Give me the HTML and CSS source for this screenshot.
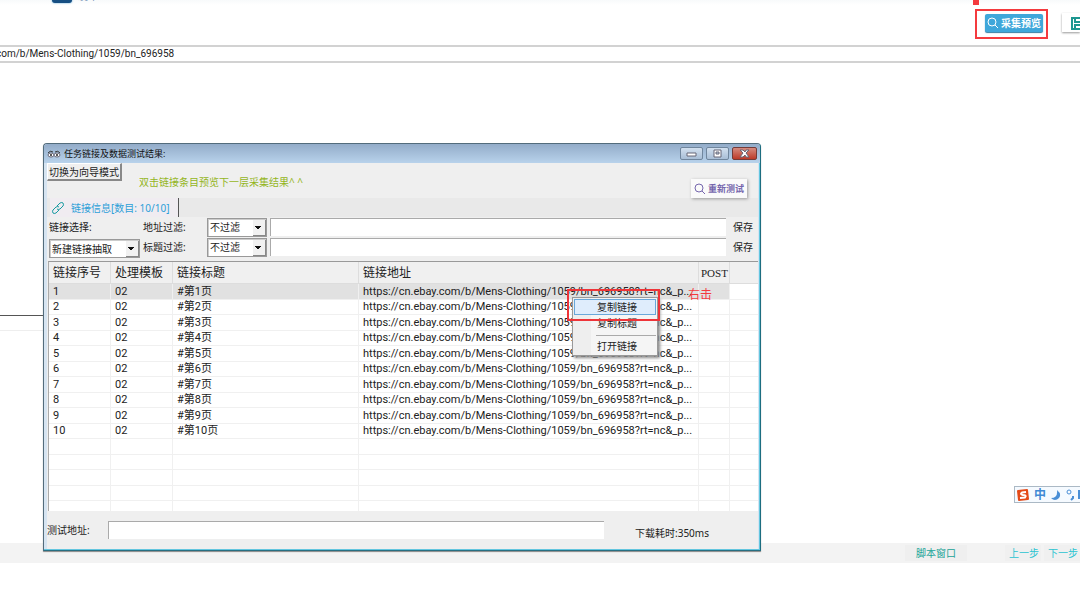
FILE: index.html
```html
<!DOCTYPE html>
<html lang="zh-CN">
<head>
<meta charset="utf-8">
<title>任务链接及数据测试结果</title>
<link rel="stylesheet" href="styles.css">
<script src="rows.js" defer></script>
</head>
<body>
<div class="app">
  <header class="topbar">
    <div class="brand"><span class="brand-mark"></span><span class="brand-name">发布</span></div>
    <div class="tools">
      <span class="marker-dot"></span>
      <div class="marker">
        <button class="preview" type="button"><svg viewBox="0 0 12 12" width="12" height="12"><circle cx="5" cy="5" r="4"/><path d="M8 8l3 3"/></svg>采集预览</button>
      </div>
      <button class="save" type="button" aria-label="保存任务"><svg viewBox="0 0 14 14" width="14" height="14"><path d="M1 2h10l2 2v9H1z"/><path d="M4 2v4h6V2M4 13V9h6v4"/></svg></button>
    </div>
  </header>
  <input class="url" type="text" aria-label="网址" value="com/b/Mens-Clothing/1059/bn_696958">
  <main class="workspace">
    <div class="side-panel"></div>
  </main>
  <footer class="steps">
    <button class="script" type="button">脚本窗口</button>
    <button class="step" type="button">上一步</button>
    <button class="step" type="button">下一步</button>
  </footer>
  <div class="ime">
    <svg viewBox="0 0 14 14" width="14" height="14"><path d="M1 3Q1 2 2 2l9-1q1 0 1 1l1 9q0 1-1 1l-9 1q-1 0-1-1z" fill="#e44a18"/><path d="M10 4L6 4.500Q3.500 6 7 7q4 0 2 2.500L4 10" fill="none" stroke="#fff" stroke-width="2"/></svg>
    <span>中</span>
    <svg viewBox="0 0 12 12" width="12" height="12"><path d="M7 1q5 4 2 8-4 4-8 0 7 0 6-8z" fill="#4a8fd6"/></svg>
    <svg viewBox="0 0 10 12" width="10" height="12"><circle cx="3" cy="3" r="2" fill="none" stroke="#4a8fd6"/><path d="M7 7v2l-2 2" fill="none" stroke="#4a8fd6" stroke-width="2"/></svg>
    <i></i>
  </div>

  <section class="dialog" role="dialog" aria-labelledby="dialog-title">
    <div class="titlebar">
      <svg viewBox="0 0 14 8" width="14" height="8"><ellipse class="eye" cx="4" cy="5" rx="3" ry="2"/><ellipse class="eye" cx="10" cy="5" rx="3" ry="2"/><path class="brow" d="M1 3Q3 0 6 2M8 2q3-2 5 1"/><circle cx="4" cy="5" r="1"/><circle cx="10" cy="5" r="1"/></svg>
      <h1 id="dialog-title">任务链接及数据测试结果:</h1>
      <button class="win" type="button" aria-label="最小化"><svg viewBox="0 0 11 9" width="11" height="9"><path d="M1 4h9v3H1z"/></svg></button>
      <button class="win" type="button" aria-label="最大化"><svg viewBox="0 0 11 9" width="11" height="9"><path d="M2 1h7v7H2zM4 3h3v2H4z"/></svg></button>
      <button class="win close" type="button" aria-label="关闭"><svg viewBox="0 0 11 9" width="11" height="9"><path d="M1 1h3l2 2 1-2h3L7 4l3 4H7L6 6 4 8H1l3-4z"/></svg></button>
    </div>
    <div class="content">
      <div class="toolbar">
        <button class="mode" type="button">切换为向导模式</button>
        <p class="hint">双击链接条目预览下一层采集结果^ ^</p>
        <button class="retest" type="button"><svg viewBox="0 0 12 12" width="12" height="12"><circle cx="5" cy="5" r="4"/><path d="M8 8l3 3"/></svg>重新测试</button>
      </div>
      <div class="tabs">
        <button class="tab" type="button"><svg viewBox="0 0 14 14" width="14" height="14"><path d="M6 5l3-3q2-1 3 0 1 2 0 3L9 8Q7 9 6 8M8 9l-3 3q-2 1-3 0-1-2 0-3l3-3q2-1 3 0"/></svg>链接信息[数目: 10/10]</button>
      </div>
      <div class="filters">
        <label for="pick">链接选择:</label>
        <label for="addr-mode">地址过滤:</label>
        <span class="combo"><select id="addr-mode"><option>不过滤</option></select></span>
        <input class="field" type="text" aria-label="地址过滤内容">
        <button class="plain" type="button">保存</button>
        <span class="combo pick"><select id="pick"><option>新建链接抽取</option></select></span>
        <label for="title-mode">标题过滤:</label>
        <span class="combo"><select id="title-mode"><option>不过滤</option></select></span>
        <input class="field" type="text" aria-label="标题过滤内容">
        <button class="plain" type="button">保存</button>
      </div>
      <div class="list">
        <table>
          <colgroup><col class="c-id"><col class="c-id"><col class="c-title"><col><col class="c-post"><col class="c-rest"></colgroup>
          <thead><tr><th>链接序号</th><th>处理模板</th><th>链接标题</th><th>链接地址</th><th class="post">POST</th><th></th></tr></thead>
          <tbody id="rows"></tbody>
        </table>
        <div class="menu">
          <button class="active" type="button">复制链接</button>
          <button type="button">复制标题</button>
          <hr>
          <button type="button">打开链接</button>
        </div>
        <div class="callout"></div>
        <span class="callout-text">右击</span>
      </div>
      <div class="status">
        <label for="test-url">测试地址:</label>
        <input class="field" id="test-url" type="text">
        <span class="time">下载耗时:350ms</span>
      </div>
    </div>
  </section>
</div>
</body>
</html>
```
FILE: rows.js
```js
const body = document.getElementById('rows');
const url = 'https://cn.ebay.com/b/Mens-Clothing/1059/bn_696958?rt=nc&_p...';
for (let i = 1; i <= 15; i++) {
  const row = body.insertRow();
  const values = i <= 10 ? [i, '02', `#第${i}页`, url, '', ''] : ['', '', '', '', '', ''];
  for (const value of values) row.insertCell().textContent = value;
}
```
FILE: styles.css
```css
* { box-sizing: border-box; }
body { margin: 0; background: #fff; }
body, button, input, select {
  font-family: "Noto Sans", "Noto Sans CJK SC", sans-serif;
  font-size: 10px;
  line-height: 14px;
  color: #222;
}
button { border: 0; padding: 0; background: none; white-space: nowrap; }
svg { flex: none; }

.app { position: relative; min-height: 100vh; display: flex; flex-direction: column; overflow: hidden; }
.topbar { height: 45px; display: flex; justify-content: space-between; overflow: hidden; background: linear-gradient(#f8fafb, #fff 5px); }
.brand { display: flex; gap: 6px; margin: -11px 0 0 52px; height: 14px; }
.brand-mark { width: 20px; background: #174f83; border-radius: 3px; box-shadow: 0 0 2px #4d9fd0; }
.brand-name { color: #7190b5; }
.tools { display: flex; position: relative; }
.marker-dot { position: absolute; left: -2px; top: -1px; width: 6px; height: 6px; background: #f43a3e; }
.marker { margin-top: 9px; width: 73px; height: 30px; border: 2px solid #f43a3e; display: flex; justify-content: flex-end; padding: 3px 3px 0 0; }
.preview { display: flex; align-items: center; justify-content: center; gap: 2px; width: 58px; height: 18px; background: #3fa7da; color: #fff; font-weight: 700; border-radius: 2px; box-shadow: 0 1px 1px #347fa5; }
.preview svg, .retest svg, .save svg, .tab svg { fill: none; stroke: currentColor; stroke-width: 1; }
.save { margin: 13px 0 0 14px; width: 18px; height: 19px; overflow: hidden; padding-left: 9px; color: #1d9690; box-shadow: 0 1px 2px #999; display: flex; align-items: center; }
.save svg { stroke-width: 2; }

.url { width: 100%; height: 18px; border: solid #d2d2d2; border-width: 2px 0; padding: 0 0 2px; text-indent: -4px; outline: 0; font-family: Roboto, "Noto Sans CJK SC", sans-serif; }
.workspace { height: 480px; }
.side-panel { width: 43px; height: 268px; border-bottom: 1px solid #eee; background: linear-gradient(#555, #555) 0 252px / 100% 1px no-repeat; }
.steps { height: 20px; background: #f3f3f3; display: flex; justify-content: flex-end; align-items: center; }
.script { width: 62px; height: 16px; background: #efefef; color: #20a397; margin-right: 38px; }
.step { height: 16px; background: #f0f0f0; color: #2bc4d0; padding: 0 2px 0 4px; }
.step + .step { margin-left: 3px; }

.ime { position: absolute; right: 0; top: 486px; width: 66px; height: 17px; border: 1px solid #abb9c5; border-right: 0; background: #f5faff; display: flex; align-items: center; gap: 4px; padding-left: 1px; overflow: hidden; color: #3f89d4; font-weight: 700; font-size: 12px; }
.ime svg + i { margin-left: -2px; }
.ime i { width: 4px; height: 9px; background: #4a8fd6; flex: none; }

.dialog { position: absolute; left: 43px; right: 319px; top: 143px; border: 1px solid #536c7c; border-right-color: #1c6d80; border-bottom-color: #286f82; border-radius: 4px 4px 0 0; background: #d6e4f1; padding: 0 2px 1px 3px; box-shadow: inset -1px -1px #63c6df, 0 1px 1px #888; }
.titlebar { height: 19px; display: flex; align-items: center; gap: 3px; margin: 0 -2px 0 -3px; padding: 0 3px; background: linear-gradient(#93acc9, #b8d2eb); border-radius: 3px 3px 0 0; }
.titlebar h1 { margin: 0; flex: 1; font-size: 9px; font-weight: 400; line-height: 14px; color: #111; }
.titlebar > svg { fill: #222; }
.titlebar .eye { fill: #fff; stroke: #667; }
.brow { fill: none; stroke: #333; }
.win { display: flex; align-items: center; justify-content: center; width: 23px; height: 13px; border: 1px solid #70869d; border-radius: 2px; background: linear-gradient(#d2e0ef, #a8bed6); }
.win svg { fill: #fff; fill-rule: evenodd; stroke: #667; stroke-width: 1; }
.close { width: 25px; background: linear-gradient(#d58a7e, #bd3a29); border-color: #743b38; }

.content { background: #efefef; }
.toolbar { height: 35px; display: flex; align-items: flex-start; }
.mode { width: 75px; height: 18px; border: 1px solid #fff; border-right: 2px solid #888; border-bottom: 2px solid #888; }
.hint { flex: 1; margin: 12px 0 0 17px; color: #94b51c; }
.retest { display: flex; align-items: center; justify-content: center; gap: 2px; margin: 16px 11px 0 0; width: 56px; height: 19px; background: #fafafa; color: #7566ad; font-size: 9px; font-weight: 700; box-shadow: 1px 1px 3px #999; }
.tabs { height: 19px; background: #e9e9e9; display: flex; padding-left: 3px; }
.tab { display: flex; align-items: center; gap: 6px; width: 129px; padding-left: 1px; background: #f0ecf1; color: #2da0d8; border-right: 1px solid #555; }
.tab svg { color: #159aa0; }
.filters { display: grid; grid-template-columns: 94px 64px 60px 1fr 32px; grid-template-rows: 20px 20px; align-items: center; padding-left: 2px; height: 44px; }
.combo { position: relative; display: flex; height: 19px; border: solid #999; border-width: 1px; background: #fff; box-shadow: inset 1px 1px #ccc; }
.combo select { appearance: none; width: 100%; border: 0; padding: 0 0 0 2px; background: none; outline: 0; }
.combo::after { content: ""; position: absolute; right: 0; top: 1px; bottom: 0; width: 12px; border: solid #888; border-width: 0 1px 1px 0; background: linear-gradient(#111, #111) 2px 6px / 6px 1px no-repeat, linear-gradient(#111, #111) 3px 7px / 4px 1px no-repeat, linear-gradient(#111, #111) 4px 8px / 2px 1px no-repeat, #f1f1f1; pointer-events: none; }
.pick { width: 91px; align-self: start; margin-top: 2px; }
.field { min-width: 0; height: 18px; border: solid #aaa; border-width: 1px 0 0 1px; background: #fff; outline: 0; }
.filters .field { margin: 0 0 0 3px; }
.plain { text-align: center; padding-left: 2px; }

.list { position: relative; height: 250px; margin-left: 1px; border-left: 1px solid #aaa; border-top: 1px solid #999; background: #fff; overflow: hidden; }
table { width: 100%; border-collapse: separate; border-spacing: 0; table-layout: fixed; }
.c-id { width: 62px; }
.c-title { width: 186px; }
.c-post { width: 31px; }
.c-rest { width: 28px; }
th { height: 22px; padding: 0 0 0 4px; text-align: left; font-weight: 400; font-size: 12px; line-height: 18px; background: #f0f0f0; border-right: 1px solid #ddd; border-bottom: 1px solid #ddd; white-space: nowrap; }
.post { font-family: "Liberation Serif", serif; padding-left: 2px; font-size: 11px; }
td { height: 15px; padding: 0 0 0 4px; font-family: Roboto, "Noto Sans CJK SC", sans-serif; font-size: 11px; line-height: 14px; border-right: 1px solid #f0f0f0; border-bottom: 1px solid #f0f0f0; white-space: nowrap; }
tbody tr:nth-child(odd) td { height: 16px; }
tbody tr:first-child td { background: #e1e1e1; }
th:last-child, td:last-child { border-right: 0; }
tbody tr:first-child td:last-child { background: #fff; }

.menu { position: absolute; right: 100px; top: 35px; width: 86px; height: 59px; padding: 1px; border: 1px solid #999; background: linear-gradient(90deg, #eee 18px, #f5f5f5 18px); box-shadow: 2px 2px 3px #888; }
.menu button { display: block; width: 100%; height: 16px; padding-left: 22px; text-align: left; border: 1px solid transparent; line-height: 14px; }
.menu .active { background: #dfedfc; border-color: #69a8da; }
.menu hr { margin: 4px 0 2px 22px; border: 0; border-top: 1px solid #aaa; }
.callout { position: absolute; right: 98px; top: 27px; width: 93px; height: 32px; border: 2px solid #ee3439; }
.callout-text { position: absolute; right: 46px; top: 25px; color: #f33b3e; font-size: 12px; line-height: 16px; }
.status { height: 38px; display: flex; align-items: center; }
.status label { width: 61px; }
.status .field { flex: 1; }
.time { width: 154px; padding: 6px 0 0 31px; }
```
